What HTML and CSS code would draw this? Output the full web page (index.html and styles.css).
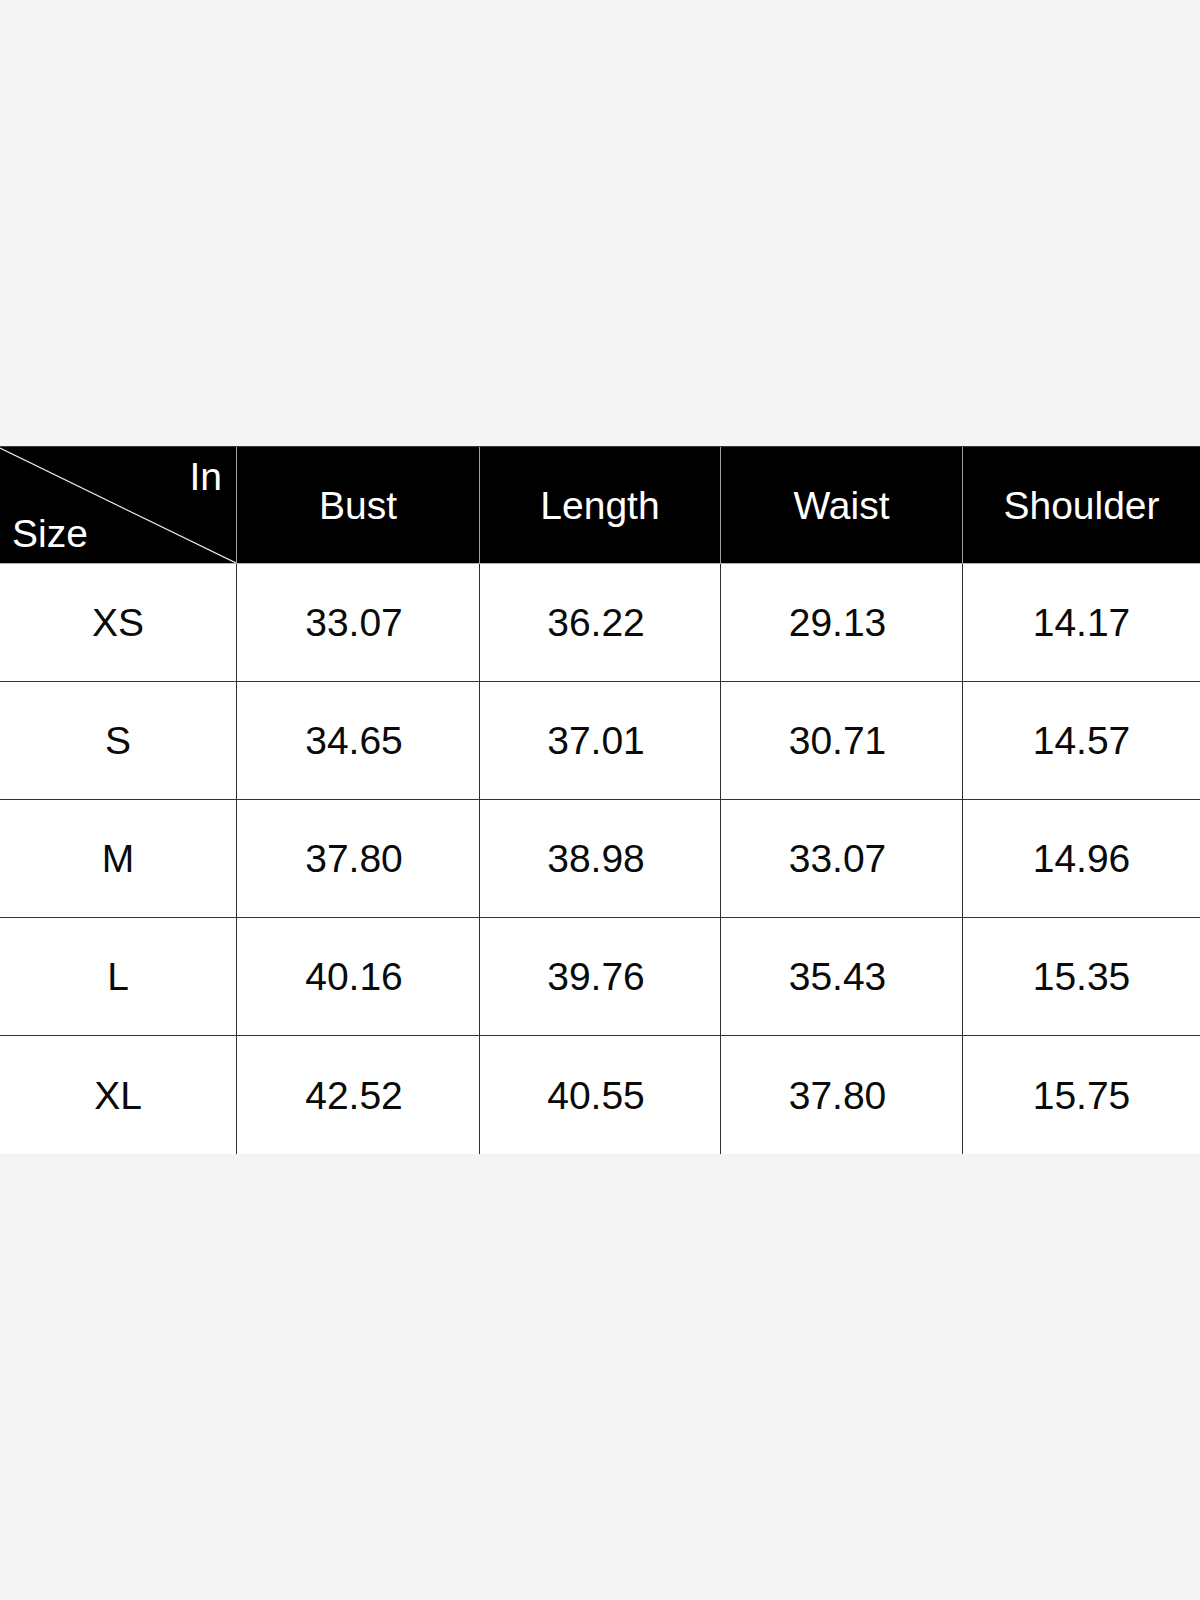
FILE: index.html
```html
<!DOCTYPE html>
<html lang="en">
<head>
<meta charset="utf-8">
<title>Size Chart</title>
<link rel="stylesheet" href="styles.css">
</head>
<body>
<div class="page">
  <div class="chart">
    <div class="cell head corner">
      <svg class="diag" viewBox="0 0 100 100" preserveAspectRatio="none" aria-hidden="true">
        <line x1="0" y1="1" x2="100" y2="100" stroke="#e8e8e8" stroke-width="1.2" vector-effect="non-scaling-stroke"/>
      </svg>
      <span class="in">In</span>
      <span class="size">Size</span>
    </div>
    <div class="cell head">Bust</div>
    <div class="cell head">Length</div>
    <div class="cell head">Waist</div>
    <div class="cell head last">Shoulder</div>

    <div class="cell">XS</div><div class="cell num">33.07</div><div class="cell num">36.22</div><div class="cell num">29.13</div><div class="cell last">14.17</div>
    <div class="cell">S</div><div class="cell num">34.65</div><div class="cell num">37.01</div><div class="cell num">30.71</div><div class="cell last">14.57</div>
    <div class="cell">M</div><div class="cell num">37.80</div><div class="cell num">38.98</div><div class="cell num">33.07</div><div class="cell last">14.96</div>
    <div class="cell">L</div><div class="cell num">40.16</div><div class="cell num">39.76</div><div class="cell num">35.43</div><div class="cell last">15.35</div>
    <div class="cell bottom">XL</div><div class="cell bottom num">42.52</div><div class="cell bottom num">40.55</div><div class="cell bottom num">37.80</div><div class="cell bottom last">15.75</div>
  </div>
</div>
</body>
</html>
```
FILE: styles.css
```css
html, body {
  margin: 0;
  padding: 0;
  background: #f4f4f4;
}

.page {
  width: 1200px;
  height: 1600px;
  padding-top: 446px;
  box-sizing: border-box;
  font-family: "Liberation Sans", Arial, sans-serif;
}

.chart {
  display: grid;
  grid-template-columns: 237px 243px 241px 242px 237px;
  grid-template-rows: 117px repeat(5, 118px);
  border-top: 1px solid #3a3a3a;
  box-sizing: border-box;
  width: 1200px;
}

.cell {
  display: flex;
  align-items: center;
  justify-content: center;
  box-sizing: border-box;
  background: #ffffff;
  color: #0a0a0a;
  font-size: 39px;
  line-height: 1;
  border-right: 1px solid #2e2e2e;
  border-bottom: 1px solid #333333;
}

.cell.num {
  padding-right: 8px;
}

.cell.bottom {
  border-bottom: none;
}

.cell.last {
  border-right: none;
}

.head {
  background: #000000;
  color: #ffffff;
  border-right: 1px solid #a0a0a0;
  border-bottom: 1px solid #b0b0b0;
}

.head.last {
  border-right: none;
}

.corner {
  position: relative;
  flex-direction: column;
  justify-content: space-between;
  align-items: stretch;
  padding: 10px 14px 10px 12px;
}

.diag {
  position: absolute;
  left: 0;
  top: 0;
  width: 100%;
  height: 100%;
}

.in {
  position: relative;
  align-self: flex-end;
}

.size {
  position: relative;
  align-self: flex-start;
}
```
